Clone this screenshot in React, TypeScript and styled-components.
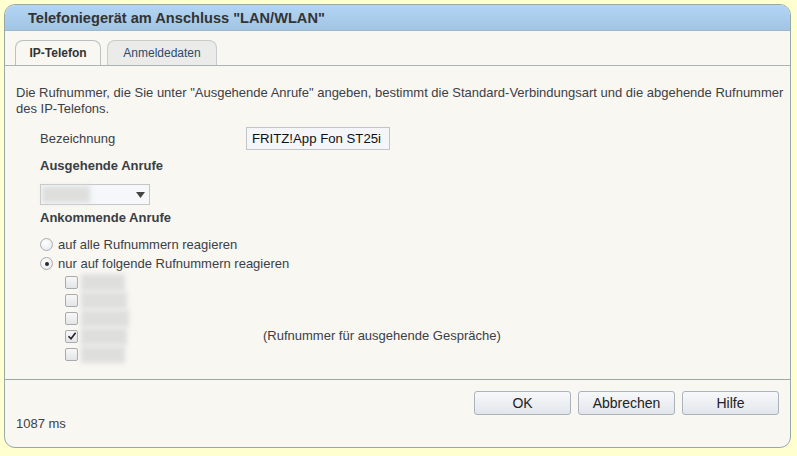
import React from "react";
import styled, { createGlobalStyle } from "styled-components";

const Global = createGlobalStyle`
  html, body { margin: 0; padding: 0; background: #ffffd0; }
  body { font-family: "Liberation Sans", Arial, sans-serif; }
`;

const Page = styled.div`
  width: 797px;
  height: 456px;
  padding: 4px 6px 8px 4px;
  box-sizing: border-box;
  display: flex;
`;

const Panel = styled.div`
  flex: 1;
  display: flex;
  flex-direction: column;
  background: #f8f7f2;
  border: 1px solid #9aa8a8;
  border-radius: 11px;
  overflow: hidden;
`;

const Header = styled.div`
  height: 25px;
  flex: none;
  background: linear-gradient(#b3d5f5, #a2c5e3);
  border-bottom: 1px solid #9fb7cc;
  display: flex;
  align-items: center;
  padding-left: 23px;
  font-size: 14.6px;
  font-weight: bold;
  color: #333;
`;

const TabBar = styled.div`
  display: flex;
  gap: 6px;
  padding: 9px 0 0 10px;
  border-bottom: 1px solid #aab4b4;
  flex: none;
`;

const Tab = styled.div<{ $active?: boolean }>`
  height: 25px;
  box-sizing: border-box;
  border: 1px solid ${(p) => (p.$active ? "#b9c1c1" : "#c9cccc")};
  border-bottom: none;
  border-radius: 8px 8px 0 0;
  background: ${(p) => (p.$active ? "#f8f7f2" : "#ebebea")};
  display: flex;
  align-items: center;
  justify-content: center;
  white-space: nowrap;
  font-size: 12px;
  font-weight: ${(p) => (p.$active ? "bold" : "normal")};
  color: ${(p) => (p.$active ? "#333" : "#2b4a6b")};
  width: ${(p) => (p.$active ? "86px" : "110px")};
`;

const Content = styled.div`
  flex: 1;
  display: flex;
  flex-direction: column;
  padding: 19px 2px 0 11px;
  border-bottom: 1px solid #9aa8a8;
  font-size: 13px;
  line-height: 16px;
  color: #3c4046;
`;

const Intro = styled.p`
  margin: 0 0 10px 0;
`;

const Indent = styled.div`
  padding-left: 24px;
  display: flex;
  flex-direction: column;
`;

const FieldRow = styled.div`
  display: grid;
  grid-template-columns: 206px 144px;
  align-items: center;
  height: 23px;
`;

const TextInput = styled.div`
  height: 23px;
  box-sizing: border-box;
  border: 1px solid #c2c4c6;
  background: #f4f6f9;
  color: #111;
  font-size: 13.2px;
  display: flex;
  align-items: center;
  padding-left: 5px;
  white-space: nowrap;
`;

const SectionTitle = styled.div<{ $top: number }>`
  font-weight: bold;
  font-size: 13px;
  margin-top: ${(p) => p.$top}px;
  color: #3a3e44;
`;

const Select = styled.div`
  margin-top: 10px;
  width: 110px;
  height: 21px;
  box-sizing: border-box;
  border: 1px solid #c4c6c8;
  background: #f5f7fa;
  display: flex;
  align-items: center;
  justify-content: space-between;
  padding: 0 4px 0 1px;
`;

const Blur = styled.span<{ $w: number; $h?: number }>`
  display: inline-block;
  width: ${(p) => p.$w}px;
  height: ${(p) => p.$h ?? 17}px;
  background: #dededd;
  filter: blur(2.5px);
  flex: none;
`;

const RadioList = styled.div`
  margin-top: 9px;
  display: flex;
  flex-direction: column;
`;

const RadioRow = styled.div`
  height: 19px;
  display: flex;
  align-items: center;
  gap: 5px;
`;

const RadioDot = styled.span<{ $checked?: boolean }>`
  width: 11px;
  height: 11px;
  border-radius: 50%;
  border: 1px solid #a9acae;
  background: radial-gradient(circle at 40% 35%, #ffffff, #e2e4e6);
  display: inline-flex;
  align-items: center;
  justify-content: center;
  flex: none;
  &::after {
    content: "";
    width: 4px;
    height: 4px;
    border-radius: 50%;
    background: ${(p) => (p.$checked ? "#2a2a2a" : "transparent")};
  }
`;

const CheckList = styled.div`
  padding-left: 25px;
  display: flex;
  flex-direction: column;
`;

const CheckRow = styled.div`
  height: 18px;
  display: flex;
  align-items: center;
`;

const Box = styled.span`
  width: 11px;
  height: 11px;
  border: 1px solid #a8abae;
  border-radius: 2px;
  background: linear-gradient(#f7f7f8, #e3e5e7);
  display: inline-flex;
  align-items: center;
  justify-content: center;
  margin-right: 3px;
  flex: none;
`;

const Note = styled.span`
  margin-left: 136px;
`;

const Footer = styled.div`
  flex: none;
  height: 67px;
  box-sizing: border-box;
  display: flex;
  flex-direction: column;
  padding: 11px 11px 0 11px;
`;

const ButtonRow = styled.div`
  display: flex;
  justify-content: flex-end;
  gap: 7px;
`;

const Button = styled.button`
  width: 97px;
  height: 24px;
  box-sizing: border-box;
  border: 1px solid #aab2bb;
  border-radius: 3px;
  background: linear-gradient(#f7f8fa, #e2e6eb);
  font-family: "Liberation Sans", Arial, sans-serif;
  font-size: 14px;
  color: #222;
  padding: 0;
`;

const Timing = styled.div`
  font-size: 13px;
  color: #3c4046;
  line-height: 16px;
  margin-top: 1px;
`;

const Check = () => (
  <svg width="10" height="10" viewBox="0 0 10 10">
    <path d="M1.5 5.2 L4 7.8 L8.6 1.8" stroke="#222" strokeWidth="1.6" fill="none" />
  </svg>
);

const Arrow = () => (
  <svg width="9" height="6" viewBox="0 0 9 6">
    <path d="M0 0 H9 L4.5 6 Z" fill="#444" />
  </svg>
);

const numbers = [
  { w: 44, checked: false },
  { w: 46, checked: false },
  { w: 48, checked: false },
  { w: 46, checked: true, note: true },
  { w: 44, checked: false },
];

export default function App() {
  return (
    <Page>
      <Global />
      <Panel>
        <Header>Telefoniegerät am Anschluss "LAN/WLAN"</Header>
        <TabBar>
          <Tab $active>IP-Telefon</Tab>
          <Tab>Anmeldedaten</Tab>
        </TabBar>
        <Content>
          <Intro>
            Die Rufnummer, die Sie unter "Ausgehende Anrufe" angeben, bestimmt die Standard-Verbindungsart und die
            abgehende Rufnummer des IP-Telefons.
          </Intro>
          <Indent>
            <FieldRow>
              <span>Bezeichnung</span>
              <TextInput>FRITZ!App Fon ST25i</TextInput>
            </FieldRow>
            <SectionTitle $top={8}>Ausgehende Anrufe</SectionTitle>
            <Select>
              <Blur $w={48} $h={17} />
              <Arrow />
            </Select>
            <SectionTitle $top={5}>Ankommende Anrufe</SectionTitle>
            <RadioList>
              <RadioRow>
                <RadioDot />
                auf alle Rufnummern reagieren
              </RadioRow>
              <RadioRow>
                <RadioDot $checked />
                nur auf folgende Rufnummern reagieren
              </RadioRow>
            </RadioList>
            <CheckList>
              {numbers.map((n, i) => (
                <CheckRow key={i}>
                  <Box>{n.checked && <Check />}</Box>
                  <Blur $w={n.w} />
                  {n.note && <Note>(Rufnummer für ausgehende Gespräche)</Note>}
                </CheckRow>
              ))}
            </CheckList>
          </Indent>
        </Content>
        <Footer>
          <ButtonRow>
            <Button>OK</Button>
            <Button>Abbrechen</Button>
            <Button>Hilfe</Button>
          </ButtonRow>
          <Timing>1087 ms</Timing>
        </Footer>
      </Panel>
    </Page>
  );
}
